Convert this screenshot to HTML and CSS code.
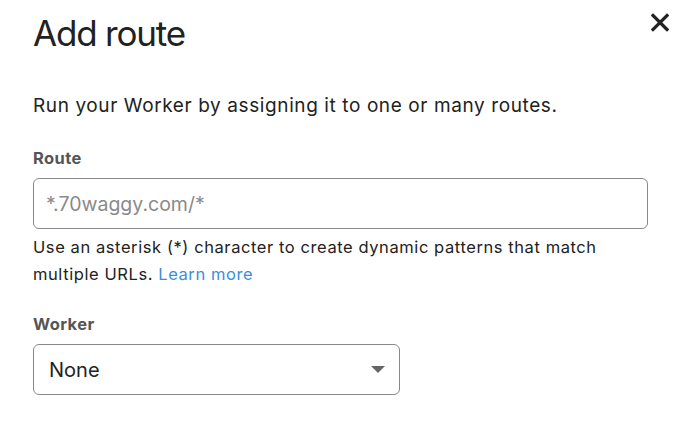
FILE: index.html
```html
<!DOCTYPE html>
<html lang="en">

<head>
    <meta charset="UTF-8">
    <meta name="viewport" content="width=device-width, initial-scale=1.0">
    <title>Add route</title>
    <link rel="stylesheet" href="styles.css">
</head>

<body>
    <div class="modal">
        <div class="modal-head">
            <h2 class="modal-title">Add route</h2>
            <button class="close-btn" aria-label="Close">
                <svg width="18" height="19" viewBox="0 0 18 19">
                    <path d="M2 2.5 L16 16.5 M16 2.5 L2 16.5" stroke="#222" stroke-width="3.2" stroke-linecap="square" fill="none" />
                </svg>
            </button>
        </div>

        <p class="intro">Run your Worker by assigning it to one or many routes.</p>

        <form class="route-form">
            <div class="field">
                <label for="route" class="field-label">Route</label>
                <input type="text" id="route" class="text-input" placeholder="*.70waggy.com/*">
                <p class="hint">Use an asterisk (*) character to create dynamic patterns that match multiple URLs. <a href="#" class="link">Learn more</a></p>
            </div>

            <div class="field field-worker">
                <label for="worker" class="field-label">Worker</label>
                <div class="select-box">
                    <span class="select-value">None</span>
                    <span class="caret"></span>
                </div>
            </div>
        </form>
    </div>
</body>

</html>
```

FILE: styles.css
```css
body {
    margin: 0;
    background-color: #fff;
    font-family: Inter, "Noto Sans", sans-serif;
    color: #222;
}

.modal {
    padding: 11px 21px 0 33px;
}

.modal-head {
    display: flex;
    justify-content: space-between;
    align-items: flex-start;
}

.modal-title {
    margin: 0;
    font-size: 35px;
    font-weight: 400;
    line-height: 44px;
    letter-spacing: -1.2px;
    color: #222;
}

.close-btn {
    border: none;
    background: none;
    padding: 0;
    margin-top: 2px;
    cursor: pointer;
}

.intro {
    margin: 37px 0 0;
    font-size: 19px;
    line-height: 28px;
    letter-spacing: 0.6px;
}

.field {
    margin-top: 27px;
}

.field-worker {
    margin-top: 25px;
}

.field-label {
    display: block;
    font-size: 16.5px;
    font-weight: 700;
    color: #555;
    line-height: 22px;
    letter-spacing: 0.4px;
}

.text-input {
    display: block;
    box-sizing: border-box;
    width: 615px;
    height: 51px;
    margin-top: 9px;
    padding: 0 12px;
    border: 1px solid #888;
    border-radius: 6px;
    font-family: inherit;
    font-size: 19.5px;
    color: #222;
}

.text-input::placeholder {
    color: #8a8a8a;
}

.hint {
    width: 615px;
    margin: 5px 0 0;
    font-size: 16.5px;
    line-height: 27px;
    letter-spacing: 0.58px;
    color: #222;
}

.link {
    color: #3b8fd8;
    text-decoration: none;
}

.select-box {
    display: flex;
    align-items: center;
    justify-content: space-between;
    box-sizing: border-box;
    width: 367px;
    height: 51px;
    margin-top: 9px;
    padding: 0 14px 0 15px;
    border: 1px solid #888;
    border-radius: 6px;
}

.select-value {
    font-size: 20px;
    color: #222;
}

.caret {
    width: 0;
    height: 0;
    border-left: 7px solid transparent;
    border-right: 7px solid transparent;
    border-top: 7px solid #666;
}
```
